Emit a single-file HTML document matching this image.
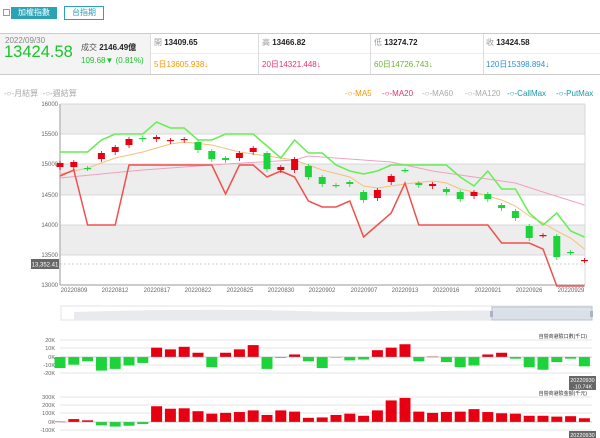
<!DOCTYPE html>
<html><head><meta charset="utf-8">
<style>
body{margin:0;width:600px;height:438px;overflow:hidden;background:#fff;font-family:"Liberation Sans","Noto Sans CJK TC",sans-serif;position:relative}
.a{position:absolute;white-space:nowrap;line-height:1}
.btn{position:absolute;top:7px;height:12px;font-size:8px;line-height:12px;text-align:center}
.s{font-size:8px}
</style></head><body>
<div class="a" style="left:3px;top:9px;width:5px;height:5px;border:1px solid #999;font-size:1px"></div>
<div class="btn" style="left:11px;width:46px;background:#2aa3b5;color:#fff">加權指數</div>
<div class="btn" style="left:64px;width:38px;border:1px solid #2aa3b5;color:#2aa3b5;top:6px">台指期</div>

<div class="a" style="left:0;top:33px;width:600px;height:1px;background:#ccc"></div>
<div class="a" style="left:0;top:74px;width:600px;height:1px;background:#ccc"></div>
<div class="a" style="left:0;top:34px;width:150px;height:40px;background:#f4f4f4"></div>
<div class="a" style="left:150px;top:53px;width:450px;height:1px;background:#eee"></div>
<div class="a s" style="left:5px;top:37px;color:#888">2022/09/30</div>
<div class="a" style="left:4px;top:44px;font-size:16.5px;color:#19c32a">13424.58</div>
<div class="a s" style="left:81px;top:44px;color:#555">成交 <b style="color:#222">2146.49億</b></div>
<div class="a s" style="left:81px;top:57px;color:#19c32a">109.68▼ (0.81%)</div>
<div class="a s" style="left:154px;top:39px;color:#999">開 <b style="color:#222">13409.65</b></div>
<div class="a s" style="left:262px;top:39px;color:#999">高 <b style="color:#222">13466.82</b></div>
<div class="a s" style="left:374px;top:39px;color:#999">低 <b style="color:#222">13274.72</b></div>
<div class="a s" style="left:486px;top:39px;color:#999">收 <b style="color:#222">13424.58</b></div>
<div class="a s" style="left:154px;top:61px;color:#f39800">5日13605.938↓</div>
<div class="a s" style="left:262px;top:61px;color:#e8336d">20日14321.448↓</div>
<div class="a s" style="left:374px;top:61px;color:#6ab233">60日14726.743↓</div>
<div class="a s" style="left:486px;top:61px;color:#2e8fd8">120日15398.894↓</div>
<div class="a" style="left:150px;top:34px;width:1px;height:40px;background:#ddd"></div>
<div class="a" style="left:258px;top:34px;width:1px;height:40px;background:#ddd"></div>
<div class="a" style="left:370px;top:34px;width:1px;height:40px;background:#ddd"></div>
<div class="a" style="left:483px;top:34px;width:1px;height:40px;background:#ddd"></div>

<div class="a s" style="left:4px;top:90px;color:#aaa">-○-月結算 &nbsp;-○-週結算</div>
<div class="a s" style="left:345px;top:90px;color:#f39800">-○-MA5</div>
<div class="a s" style="left:382px;top:90px;color:#e8336d">-○-MA20</div>
<div class="a s" style="left:422px;top:90px;color:#aaa">-○-MA60</div>
<div class="a s" style="left:465px;top:90px;color:#aaa">-○-MA120</div>
<div class="a s" style="left:507px;top:90px;color:#1a9aa8">-○-CallMax</div>
<div class="a s" style="left:556px;top:90px;color:#1a9aa8">-○-PutMax</div>

<svg class="a" style="left:0;top:0" width="600" height="438" font-family="Liberation Sans" font-size="6" fill="#666">
<g id="bands">
<rect x="60" y="104" width="525" height="30" fill="#ededed"/>
<rect x="60" y="164" width="525" height="31" fill="#ededed"/>
<rect x="60" y="225" width="525" height="30" fill="#ededed"/>
<g stroke="#d8d8d8" stroke-width="1">
<line x1="60" x2="585" y1="104" y2="104"/><line x1="60" x2="585" y1="134" y2="134"/><line x1="60" x2="585" y1="164" y2="164"/><line x1="60" x2="585" y1="195" y2="195"/><line x1="60" x2="585" y1="225" y2="225"/><line x1="60" x2="585" y1="255" y2="255"/>
<line x1="585" x2="585" y1="104" y2="285"/></g>
<line x1="60" x2="585" y1="285" y2="285" stroke="#bbb" stroke-width="1.5"/>
<line x1="60" x2="60" y1="104" y2="285" stroke="#bbb" stroke-width="1.5"/>
<line x1="60" x2="585" y1="264" y2="264" stroke="#999" stroke-dasharray="2,2" stroke-width="0.6"/>
</g>
<g text-anchor="end">
<text x="58" y="106">16000</text><text x="58" y="136">15500</text><text x="58" y="166">15000</text><text x="58" y="197">14500</text><text x="58" y="227">14000</text><text x="58" y="257">13500</text><text x="58" y="287">13000</text></g>
<rect x="31" y="259" width="28" height="10" fill="#666"/>
<text x="45" y="266.5" fill="#fff" text-anchor="middle">13,352.41</text>
<g text-anchor="middle">
<text x="74" y="292">20220809</text><text x="115" y="292">20220812</text><text x="157" y="292">20220817</text><text x="198" y="292">20220822</text><text x="240" y="292">20220825</text><text x="281" y="292">20220830</text><text x="322" y="292">20220902</text><text x="364" y="292">20220907</text><text x="405" y="292">20220913</text><text x="446" y="292">20220916</text><text x="488" y="292">20220921</text><text x="529" y="292">20220926</text><text x="571" y="292">20220929</text></g>
<g id="main"></g>
<rect x="61" y="306" width="531" height="14" fill="#fff" stroke="#e3e3e3"/>
<path d="M74 320 L74 312 Q200 308 300 311 Q380 313 440 311 L510 310 L592 311 L592 320Z" fill="#e8eaee"/>
<rect x="492" y="307" width="100" height="13" fill="#d6dce6" fill-opacity="0.8" stroke="#b9c2d1"/>
<rect x="490" y="311" width="3" height="6" fill="#aab4c4"/><rect x="590" y="311" width="3" height="6" fill="#aab4c4"/>
<g stroke="#e6e6e6"><line x1="60" x2="592" y1="340" y2="340"/><line x1="60" x2="592" y1="348" y2="348"/><line x1="60" x2="592" y1="365" y2="365"/><line x1="60" x2="592" y1="373" y2="373"/>
<line x1="60" x2="592" y1="397" y2="397"/><line x1="60" x2="592" y1="405" y2="405"/><line x1="60" x2="592" y1="413" y2="413"/><line x1="60" x2="592" y1="430" y2="430"/></g>
<g text-anchor="end" font-size="5.5"><text x="55" y="342">20K</text><text x="55" y="350">10K</text><text x="55" y="359">0K</text><text x="55" y="367">-10K</text><text x="55" y="375">-20K</text>
<text x="55" y="399">300K</text><text x="55" y="407">200K</text><text x="55" y="415">100K</text><text x="55" y="424">0K</text><text x="55" y="432">-100K</text></g>
<text x="587" y="338" text-anchor="end" font-size="5" fill="#333">自營商避險口數(千口)</text>
<text x="587" y="395" text-anchor="end" font-size="5" fill="#333">自營商避險金額(千元)</text>
<g id="bars"></g>
<rect x="569" y="376" width="27" height="14" fill="#666"/>
<text x="582.5" y="382" fill="#fff" text-anchor="middle" font-size="5.5">20220930</text>
<text x="582.5" y="388.5" fill="#fff" text-anchor="middle" font-size="5.5">-10.74K</text>
<rect x="569" y="431" width="27" height="8" fill="#666"/>
<text x="582.5" y="437" fill="#fff" text-anchor="middle" font-size="5.5">20220930</text>
</svg>
<script>
var X=function(i){return 60+13.8*i};
var c=[[163,167,1],[162,167,1],[168,168,0],[153,159,1],[147,152,1],[139,145,1],[138,139,0],[137,139,1],[140,141,1],[139,140,1],[142,150,0],[151,159,0],[158,160,0],[153,158,1],[148,152,1],[153,169,0],[167,170,1],[159,170,1],[166,177,0],[177,184,0],[185,185,0],[182,184,0],[192,200,0],[190,198,1],[176,182,1],[170,170,0],[183,185,0],[184,186,1],[189,192,0],[192,199,0],[192,196,1],[194,199,0],[205,208,0],[211,218,0],[226,238,0],[235,235,1],[236,257,0],[252,252,0],[260,260,1]];
var call=[152,152,152,140,134,134,134,122,128,128,140,140,134,134,134,146,158,140,153,153,165,171,174,171,165,165,165,165,165,177,186,171,189,189,213,225,213,231,237];
var put=[176,170,225,225,225,165,165,165,165,165,165,165,194,165,165,177,171,177,201,207,207,201,237,225,213,183,225,225,225,225,225,225,243,243,243,249,286,286,286];
var ma5=[[0,174],[2,168],[4,158],[6,152],[8,144],[9,142],[11,145],[13,152],[15,156],[17,160],[19,170],[21,177],[22,186],[23,188],[25,184],[27,181],[28,183],[29,189],[30,192],[31,196],[32,200],[33,206],[34,216],[35,223],[36,231],[37,238],[38,249]];
var ma20=[[0,178],[6,170],[12,164],[17,160],[18,156],[24,162],[27,171],[30,177],[33,183],[35,192],[38,205]];
var s='';
function pl(a,col,w){return '<polyline fill="none" stroke="'+col+'" stroke-width="'+w+'" points="'+a.map(function(p){return X(p[0]).toFixed(1)+','+p[1]}).join(' ')+'"/>'}
s+=pl(ma20,'#f2a0bd',1);
s+=pl(ma5,'#f6c07a',1);
s+=pl(call.map(function(v,i){return[i,v]}),'#66ee55',1.5);
s+=pl(put.map(function(v,i){return[i,v]}),'#f05050',1.5);
c.forEach(function(k,i){var x=X(i),col=k[2]?'#e60012':'#1cd43a';var h=Math.max(k[1]-k[0],1.2);
s+='<line x1="'+x+'" x2="'+x+'" y1="'+(k[0]-2)+'" y2="'+(k[1]+3)+'" stroke="'+col+'" stroke-width="0.8"/>';
s+='<rect x="'+(x-3.5)+'" y="'+k[0]+'" width="7" height="'+h+'" fill="'+col+'"/>';});
document.getElementById('main').innerHTML=s;
var b1=[-13,-9,-5,-16,-14,-10,-7,11,9,12,5,-12,5,9,14,-14,-1,3,-5,-13,-0.5,-4,-3,8,11,15,-5,0.5,-6,-12,-10,3,5,-2,-12,-15,-6,-2,-11];
var b2=[5,35,20,-40,-55,-45,-25,190,160,165,130,100,110,120,140,85,140,125,50,55,85,100,75,140,260,290,125,110,120,125,155,120,105,100,75,75,65,70,45];
var t='';
function bar(v,i,z,k){var x=X(i),h=Math.abs(v)*k,y=v>0?z-h:z;t+='<rect x="'+(x-5.5)+'" y="'+y+'" width="11" height="'+Math.max(h,0.6)+'" fill="'+(v>0?'#e60012':'#1cd43a')+'"/>';}
b1.forEach(function(v,i){bar(v,i,357,0.85)});
b2.forEach(function(v,i){bar(v,i,422,0.083)});
t+='<line x1="60" x2="592" y1="357" y2="357" stroke="#999" stroke-width="0.6"/><line x1="60" x2="592" y1="422" y2="422" stroke="#999" stroke-width="0.6"/>';
document.getElementById('bars').innerHTML=t;
</script>
</body></html>
